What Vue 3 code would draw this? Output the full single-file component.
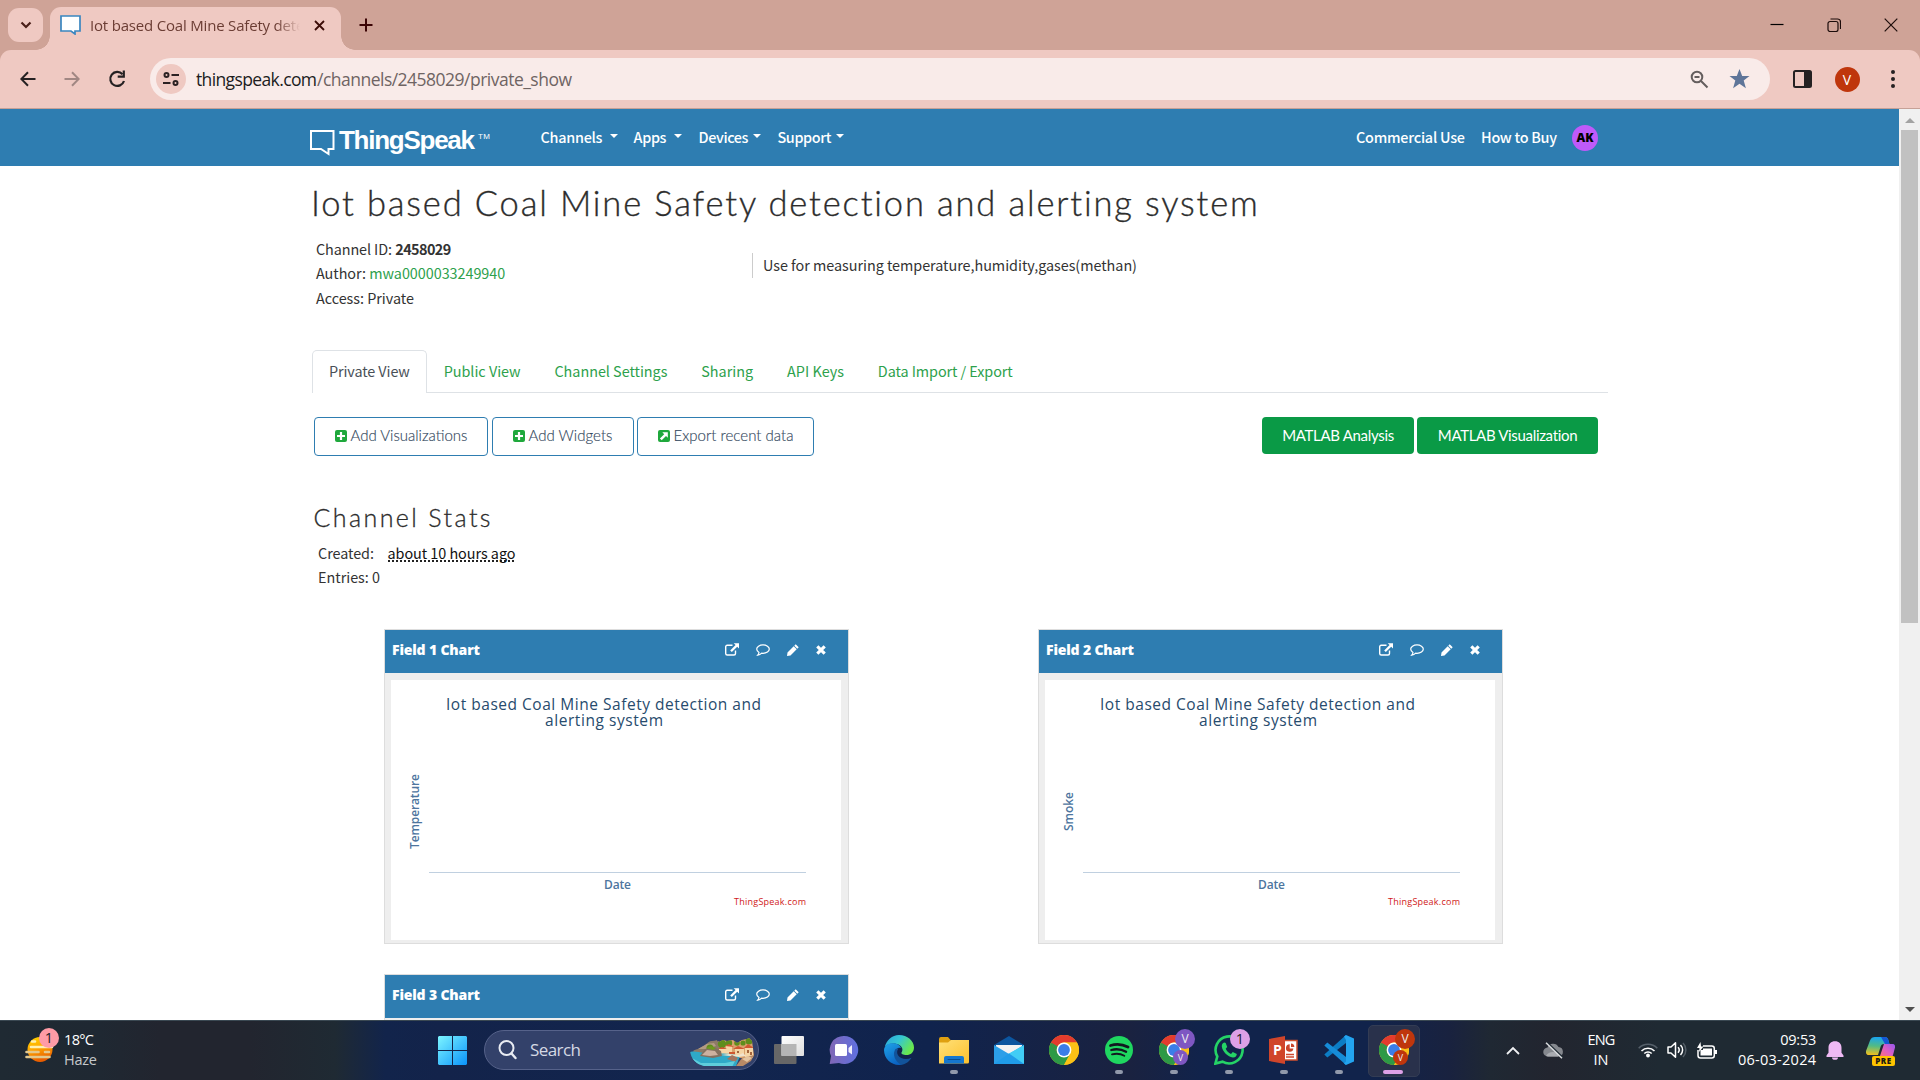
<script setup>
// Spreads an element's letters so that its text spans the given width in pixels.
const vFit = {
  mounted(el, { value }) {
    el.style.display = 'inline-block'
    el.style.whiteSpace = 'pre'
    const natural = el.getBoundingClientRect().width
    const gaps = Math.max(1, el.textContent.length - 1)
    el.style.letterSpacing = (value - natural) / gaps + 'px'
    el.style.width = value + 'px'
  },
}

const menus = [
  { label: 'Channels', width: 62, gap: 7, next: 16 },
  { label: 'Apps', width: 33, gap: 7, next: 17 },
  { label: 'Devices', width: 50, gap: 4, next: 17 },
  { label: 'Support', width: 54, gap: 4, next: 0 },
]

const tabs = [
  { label: 'Private View', width: 81, active: true },
  { label: 'Public View', width: 77 },
  { label: 'Channel Settings', width: 113 },
  { label: 'Sharing', width: 52 },
  { label: 'API Keys', width: 57 },
  { label: 'Data Import / Export', width: 135 },
]

const actions = [
  { label: 'Add Visualizations', width: 117, box: 174, icon: 'plus' },
  { label: 'Add Widgets', width: 84, box: 142, icon: 'plus' },
  { label: 'Export recent data', width: 120, box: 177, icon: 'arrow' },
]

const charts = [
  { name: 'Field 1 Chart', axis: 'Temperature', span: 75 },
  { name: 'Field 2 Chart', axis: 'Smoke', span: 39 },
  { name: 'Field 3 Chart' },
]

const apps = [
  { id: 'taskview' },
  { id: 'chat' },
  { id: 'edge' },
  { id: 'files', open: true },
  { id: 'mail' },
  { id: 'chrome' },
  { id: 'spotify', open: true },
  { id: 'chrome', open: true, profile: '#7e57c2' },
  { id: 'whatsapp', open: true, count: 1 },
  { id: 'powerpoint', open: true },
  { id: 'vscode', open: true },
  { id: 'chrome', open: true, profile: '#bf360c', active: true },
]
</script>

<template>
  <div class="screen">
    <header class="browser">
      <div class="strip">
        <div class="tab-search">
          <svg width="12" height="8" viewBox="0 0 12 8"><path d="M1.5 1.5 6 6l4.500-4.500" fill="none" stroke="#4a2019" stroke-width="2.200" /></svg>
        </div>
        <div class="tab">
          <svg class="favicon" width="21" height="20" viewBox="0 0 21 20"><path d="M1 1h19v15h-5v3l-4-3H1z" fill="#fff" stroke="#3a86c0" stroke-width="1.700" /></svg>
          <span class="tab-title"><span v-fit="248">Iot based Coal Mine Safety detection</span></span>
          <svg class="tab-close" width="11" height="11" viewBox="0 0 11 11"><path d="M1 1l9 9M10 1l-9 9" stroke="#3b0d08" stroke-width="1.800" /></svg>
        </div>
        <svg class="new-tab" width="14" height="14" viewBox="0 0 14 14"><path d="M7 .5v13M.5 7h13" stroke="#3b0404" stroke-width="2" /></svg>
        <div class="window-buttons">
          <svg width="14" height="14" viewBox="0 0 14 14"><path d="M.5 6.500h13" stroke="#000" stroke-width="1.200" /></svg>
          <svg width="14" height="14" viewBox="0 0 14 14"><path d="M3.500 1h7a3 3 0 0 1 3 3v7M1 5.500A2 2 0 0 1 3 3.500h6a2 2 0 0 1 2 2v6a2 2 0 0 1-2 2H3a2 2 0 0 1-2-2z" fill="none" stroke="#1c0c0a" stroke-width="1.200" /></svg>
          <svg width="14" height="14" viewBox="0 0 14 14"><path d="M.7.7l12.600 12.600M13.300.7.700 13.300" stroke="#1c0c0a" stroke-width="1.200" /></svg>
        </div>
      </div>
      <div class="toolbar">
        <svg class="back" width="16" height="16" viewBox="0 0 16 16"><path d="M15.500 8H1.500M8 1.300 1.300 8 8 14.700" fill="none" stroke="#252122" stroke-width="2" /></svg>
        <svg class="forward" width="16" height="16" viewBox="0 0 16 16"><path d="M.5 8h14M8 1.300 14.700 8 8 14.700" fill="none" stroke="#a18783" stroke-width="2" /></svg>
        <svg class="reload" width="18" height="18" viewBox="0 0 18 18"><path d="M14.500 4.200A7 7 0 1 0 16 11" fill="none" stroke="#252122" stroke-width="2.200" /><path d="M16.900.5v7.200H9.700V5.500h5V.5z" fill="#252122" /></svg>
        <div class="omnibox">
          <span class="site-info">
            <svg width="16" height="14" viewBox="0 0 16 14"><g fill="none" stroke="#2b2122" stroke-width="2"><circle cx="3.500" cy="3" r="2" /><path d="M8.500 3H16M0 11h7.500" /><circle cx="12.500" cy="11" r="2" /></g></svg>
          </span>
          <span class="url"><span v-fit="121">thingspeak.com</span><span class="path" v-fit="255">/channels/2458029/private_show</span></span>
          <svg class="lens" width="19" height="19" viewBox="0 0 19 19"><circle cx="7" cy="7" r="5.300" fill="none" stroke="#655e5e" stroke-width="2" /><path d="M4.500 7h5M11 11l6.500 6.500" stroke="#655e5e" stroke-width="2" /></svg>
          <svg class="star" width="21" height="20" viewBox="0 0 21 20"><path d="M10.500 0l2.700 7h7.300l-5.800 4.600 2.200 7.700-6.400-4.500-6.400 4.500 2.200-7.700L.5 7h7.300z" fill="#5f7599" /></svg>
        </div>
        <svg class="panel" width="19" height="18" viewBox="0 0 19 18"><rect x="1" y="1" width="17" height="16" rx="1.500" fill="none" stroke="#252122" stroke-width="2" /><path d="M11 1h7v16h-7z" fill="#252122" /></svg>
        <span class="profile">V</span>
        <svg class="kebab" width="4" height="18" viewBox="0 0 4 18"><g fill="#252122"><circle cx="2" cy="2" r="2" /><circle cx="2" cy="9" r="2" /><circle cx="2" cy="16" r="2" /></g></svg>
      </div>
    </header>

    <div class="viewport">
      <div class="page">
        <nav class="navbar">
          <svg class="logo-mark" width="25" height="26" viewBox="0 0 25 26"><path d="M1 1h22.500v18h-5v5l-7.500-5H1z" fill="none" stroke="#fff" stroke-width="2" /></svg>
          <span class="logo-text" v-fit="136">ThingSpeak</span>
          <span class="tm" v-fit="12">TM</span>
          <div class="menus">
            <span v-for="m in menus" :key="m.label" class="menu" :style="{ marginRight: m.next + 'px' }">
              <span v-fit="m.width">{{ m.label }}</span><i class="caret" :style="{ marginLeft: m.gap + 'px' }"></i>
            </span>
          </div>
          <div class="nav-right">
            <span v-fit="109">Commercial Use</span>
            <span v-fit="76">How to Buy</span>
            <b class="user">AK</b>
          </div>
        </nav>

        <main class="content">
          <h1><span v-fit="948">Iot based Coal Mine Safety detection and alerting system</span></h1>
          <section class="info">
            <div class="facts">
              <div><span v-fit="76">Channel ID:</span> <b v-fit="56">2458029</b></div>
              <div><span v-fit="50">Author:</span> <a v-fit="136">mwa0000033249940</a></div>
              <div><span v-fit="98">Access: Private</span></div>
            </div>
            <p class="about"><span v-fit="374">Use for measuring temperature,humidity,gases(methan)</span></p>
          </section>

          <ul class="tabs">
            <li v-for="t in tabs" :key="t.label" :class="{ active: t.active }"><span v-fit="t.width">{{ t.label }}</span></li>
          </ul>

          <section class="actions">
            <button v-for="a in actions" :key="a.label" class="outline" :style="{ width: a.box + 'px' }">
              <svg width="12" height="12" viewBox="0 0 12 12">
                <rect width="12" height="12" rx="2" fill="#1fa83c" />
                <path v-if="a.icon === 'plus'" d="M6 2v8M2 6h8" stroke="#fff" stroke-width="2.200" />
                <path v-else d="M4.300 2.200h5.500v5.500L8 6 3.700 10.300 1.900 8.500 6.200 4.200z" fill="#fff" />
              </svg>
              <span v-fit="a.width">{{ a.label }}</span>
            </button>
            <div class="matlab">
              <button class="solid analysis"><span v-fit="112">MATLAB Analysis</span></button>
              <button class="solid visual"><span v-fit="140">MATLAB Visualization</span></button>
            </div>
          </section>

          <h2><span v-fit="177">Channel Stats</span></h2>
          <section class="stats">
            <div><span v-fit="56">Created:</span><abbr v-fit="128">about 10 hours ago</abbr></div>
            <div><span v-fit="62">Entries: 0</span></div>
          </section>

          <section class="charts">
            <article v-for="c in charts" :key="c.name" class="card">
              <header>
                <b v-fit="88">{{ c.name }}</b>
                <span class="tools">
                  <svg width="14" height="13" viewBox="0 0 14 13"><path d="M7.500 2.200H2.200a1.500 1.500 0 0 0-1.500 1.500v6.800A1.500 1.500 0 0 0 2.200 12H9a1.500 1.500 0 0 0 1.500-1.500V7.500" fill="none" stroke="#fff" stroke-width="1.400" /><path d="M8.700.2H14v5.300l-1.800-1.800-5.400 5.400-1.600-1.600 5.400-5.400z" fill="#fff" /></svg>
                  <svg width="14" height="12" viewBox="0 0 14 12"><path d="M7 .9c3.500 0 6.300 1.900 6.300 4.200S10.500 9.300 7 9.300l-1.300-.1C4.700 10.200 3.300 11 1.700 11.200c.7-.8 1.100-1.500 1.300-2.700C1.600 7.700.7 6.500.7 5.100.7 2.800 3.500.9 7 .9z" fill="none" stroke="#fff" stroke-width="1.200" /></svg>
                  <svg width="12" height="12" viewBox="0 0 12 12"><path d="M8.700.300 11.700 3.300 10.300 4.700 7.300 1.700zM6.700 2.300 9.700 5.300 3.500 11.500 0 12l.5-3.500z" fill="#fff" /></svg>
                  <svg width="10" height="10" viewBox="0 0 10 10"><path d="M1.300 1.300l7.400 7.400M8.700 1.300 1.300 8.700" stroke="#fff" stroke-width="3.100" /></svg>
                </span>
              </header>
              <svg v-if="c.axis" class="plot" width="450" height="260" viewBox="0 0 450 260">
                <rect width="450" height="260" fill="#fff" />
                <g class="plot-title">
                  <text x="55" y="30" textLength="315">Iot based Coal Mine Safety detection and</text>
                  <text x="154" y="46" textLength="118">alerting system</text>
                </g>
                <text class="axis" text-anchor="middle" :textLength="c.span" transform="translate(28 131.500) rotate(-90)">{{ c.axis }}</text>
                <path d="M38 192.500h377" stroke="#c0d0e0" />
                <text class="axis" x="213" y="209" textLength="27">Date</text>
                <text class="credit" x="343" y="225" textLength="72">ThingSpeak.com</text>
              </svg>
            </article>
          </section>
        </main>
      </div>
      <aside class="scrollbar">
        <i class="up"></i>
        <i class="thumb"></i>
        <i class="down"></i>
      </aside>
    </div>

    <footer class="taskbar">
      <div class="weather">
        <svg width="30" height="28" viewBox="0 0 30 28">
          <defs><linearGradient id="sun" x1="0" y1="0" x2=".3" y2="1"><stop offset="0" stop-color="#ffd800" /><stop offset=".5" stop-color="#ffa800" /><stop offset="1" stop-color="#e85d00" /></linearGradient></defs>
          <circle cx="15" cy="13.500" r="12.500" fill="url(#sun)" />
          <g stroke-linecap="round" stroke-width="2.600"><path d="M7 5.500h3M6 11h21" stroke="#fff0b0" /><path d="M1.500 16h12M20 16h4M1.500 21h23" stroke="#e3c88d" /></g>
        </svg>
        <span class="badge">1</span>
        <p><span v-fit="30">18°C</span><br /><span class="dim" v-fit="33">Haze</span></p>
      </div>
      <svg class="start" width="29" height="29" viewBox="0 0 29 29">
        <defs><linearGradient id="win" x1="0" y1="0" x2="1" y2="1"><stop offset="0" stop-color="#7df5ff" /><stop offset="1" stop-color="#0a93fb" /></linearGradient></defs>
        <path d="M1 0h13v14H0V1zM15 0h13l1 1v13H15zM0 15h14v14H1l-1-1zM15 15h14v13l-1 1H15z" fill="url(#win)" />
      </svg>
      <div class="search">
        <svg width="19" height="20" viewBox="0 0 19 20"><circle cx="8.500" cy="8" r="7" fill="none" stroke="#e8ebf2" stroke-width="2" /><path d="M13.500 13.500l4 4.500" stroke="#e8ebf2" stroke-width="2.400" stroke-linecap="round" /></svg>
        <span v-fit="51">Search</span>
        <svg class="coast" width="64" height="28" viewBox="0 0 64 28">
          <defs><clipPath id="bay"><path d="M0 13 8 11l7-4 5-4 7-1 2 2 4-2 4 1 6-1 4 3 5-3 5-1 2-1 3 3 2 14-3 6-8 5H14C6 26 1 21 0 13z" /></clipPath></defs>
          <g clip-path="url(#bay)">
            <path d="M28 0h36v20H28z" fill="#d9a06c" /><path d="M3 13 16 4l11-2 5 9-8 6-18 1z" fill="#8d7a66" /><path d="M7 11l9-5 8-1 2 3-10 3z" fill="#b39a83" />
            <g fill="#5f8d1c"><circle cx="32" cy="6" r="4.200" /><circle cx="39" cy="5" r="3.200" /><circle cx="47" cy="5" r="2.800" /><circle cx="20" cy="10" r="3.500" /><circle cx="59" cy="3" r="3.500" /><circle cx="53" cy="5" r="2.600" /></g>
            <path d="M29 11h7v5h-7zM36 8h6v8h-6zM45 11h9v6h-9zM55 10h8v10h-8z" fill="#f5d5a6" /><path d="M28 11l4-2 5 2zM35 8l4-2 5 3zM43 11l5-3 7 3zM54 10l4-4 6 4zM39 14h6v2h-6z" fill="#cf5731" />
            <path d="M57 12h2v3h-2zM60 14h2v3h-2zM47 13h2v2h-2z" fill="#a5643c" />
            <path d="M0 14c8-2 16 3 24 2s20 0 26 2l-4 10H0z" fill="#2fa9c7" /><path d="M10 18l5-7 9-2 7 4 1 5-9 2z" fill="#84705f" /><path d="M12 17l5-5 8 1 3 4-8 1z" fill="#cdb1a0" /><path d="M16 10l5-2 5 2-3 2z" fill="#6d9a1e" />
            <path d="M31 17l8-1 10 1 4-2 3 3-7 1z" fill="#f1e3cd" /><path d="M37 21l5-4 6 3-3 4z" fill="#a4745f" /><path d="M46 28l6-8 12-3v11z" fill="#b98a66" /><path d="M52 21l6-3 4 2-5 4z" fill="#e4c4a0" />
            <path d="M2 20l9 5h24l10-2-3 6H8z" fill="#5fcddb" />
          </g>
        </svg>
      </div>

      <div class="apps">
        <div v-for="(a, i) in apps" :key="i" class="app" :class="{ open: a.open, active: a.active }">
          <svg width="30" height="30" viewBox="0 0 30 30">
            <template v-if="a.id === 'taskview'">
              <defs><linearGradient id="tv" x1="0" y1="0" x2="1" y2="1"><stop offset="0" stop-color="#fff" /><stop offset="1" stop-color="#dedede" /></linearGradient></defs>
              <rect y="9" width="22.500" height="20" rx="1" fill="#676767" /><rect x="7.500" y="1" width="22.500" height="20" rx="1" fill="url(#tv)" /><path d="M7.500 9h15v12h-15z" fill="#b5b5b5" />
            </template>
            <template v-else-if="a.id === 'chat'">
              <defs><linearGradient id="ch" x1="0" y1=".4" x2="1" y2=".4"><stop offset="0" stop-color="#8067b5" /><stop offset="1" stop-color="#5f70e0" /></linearGradient></defs>
              <path d="M15 1a14 14 0 1 1-5 27L.7 29 2 21A14 14 0 0 1 15 1z" fill="url(#ch)" /><rect x="6" y="9" width="12" height="12" rx="1.500" fill="#fff" /><path d="M19.500 13l3.500-3v9.500l-3.500-2.500z" fill="#f1f0fb" />
            </template>
            <template v-else-if="a.id === 'edge'">
              <defs>
                <linearGradient id="e1" x1="0" y1="0" x2="1" y2=".5"><stop offset="0" stop-color="#2ba4dc" /><stop offset=".5" stop-color="#35c6d3" /><stop offset="1" stop-color="#69e84d" /></linearGradient>
                <linearGradient id="e2" x1="0" y1="0" x2=".6" y2="1"><stop offset="0" stop-color="#1fa3e8" /><stop offset="1" stop-color="#0a5fc0" /></linearGradient>
              </defs>
              <path d="M.8 12C2.500 5 8 0 15 0c8.500 0 15 6 15 12.500 0 5-3.500 7.500-7.500 7.500-3.500 0-5.500-1-5-2.500 1.500-2 1.300-5-1.500-7C11.500 7.500 4 8 .8 12z" fill="url(#e1)" />
              <path d="M0 15C.5 9.500 5.500 7.800 10 8.300c3.500.3 6 2.400 7.200 4.700-3.500-1-7 2-6.200 6 1 5 6 8 11 7-2 2.500-4.500 4-7 4C7 30 0 23.500 0 15z" fill="url(#e2)" />
              <path d="M11.500 14C8 19 11 27 17.500 29.700c4-.6 8-3.200 10-7-5 2.500-11 1.300-13.300-2.200-1.500-2.200-1.500-5 .3-7-1-.2-2 0-3 .5z" fill="#12539a" />
            </template>
            <template v-else-if="a.id === 'files'">
              <defs><linearGradient id="fo" x1="0" y1="0" x2="1" y2="1"><stop offset="0" stop-color="#ffe078" /><stop offset="1" stop-color="#fcc12e" /></linearGradient></defs>
              <path d="M0 4a2 2 0 0 1 2-2h7l3 3.500h16v8H0z" fill="#dfa011" /><path d="M0 7.500h9L12 5h18v22a1.500 1.500 0 0 1-1.500 1.500H0z" fill="url(#fo)" /><path d="M5 28.500V23a2 2 0 0 1 2-2h16a2 2 0 0 1 2 2v5.500z" fill="#1577cf" /><path d="M9 24.500h12" stroke="#0a4f92" stroke-linecap="round" />
            </template>
            <template v-else-if="a.id === 'mail'">
              <path d="M0 10 15 1l15 9v8H0z" fill="#0b559f" /><path d="M2 10h26v8l-12 3-14-5z" fill="#f2f2f2" /><path d="M0 10l15 9 15-9v19H0z" fill="#2c9fe8" /><path d="M30 10 14 19l16 10z" fill="#41cdf5" /><path d="M0 29l15-10.500L30 29z" fill="#209ce9" />
            </template>
            <template v-else-if="a.id === 'chrome'">
              <circle cx="15" cy="15" r="15" fill="#fbc116" />
              <path d="M15 15 2 7.500A15 15 0 0 0 15 30l6.200-11.400z" fill="#2d9a46" /><path d="M2 7.500A15 15 0 0 1 28 7.500H15a7.500 7.500 0 0 0-6.500 11.200z" fill="#e33b2e" /><path d="M14.500 7.500H28A15 15 0 0 1 15 30l6.500-11.300z" fill="#fbc116" /><path d="M2 7.500 8.500 18.700 15 15z" fill="#2d9a46" />
              <circle cx="15" cy="15" r="7.400" fill="#fff" /><circle cx="15" cy="15" r="5.900" fill="#3b7de8" />
            </template>
            <template v-else-if="a.id === 'spotify'">
              <circle cx="15" cy="15" r="14" fill="#1fd760" /><g fill="none" stroke="#121820" stroke-linecap="round"><path d="M6.500 10.500c6-1.800 12-1.300 17.500 1.600" stroke-width="2.800" /><path d="M7.300 15c5-1.400 10-.9 14.800 1.700" stroke-width="2.300" /><path d="M8 19.300c4.400-1.100 8.500-.8 12.300 1.400" stroke-width="1.900" /></g>
            </template>
            <template v-else-if="a.id === 'whatsapp'">
              <path d="M1.400 28.600 3.300 21.500A13.500 13.500 0 1 1 8.500 26.700z" fill="none" stroke="#25d366" stroke-width="2.600" /><path d="M10.500 7.500c-1 0-3 1.500-2.700 4 .6 5 6 10.500 11 11 2.500.2 4-1.500 4-3.500l-4-2-1.800 2c-2.500-.9-4.500-3-5.300-5.200l1.500-1.800-1.500-4z" fill="#25d366" />
            </template>
            <template v-else-if="a.id === 'powerpoint'">
              <path d="M15 5.500h13v19.500H15z" fill="#fff" stroke="#d0502f" stroke-width="1.500" /><path d="M17 12.500a3.700 3.700 0 1 0 7.400 1h-3.700V9.300a3.700 3.700 0 0 0-3.700 3.200z" fill="#c9452a" /><path d="M22 8.500a3.500 3.500 0 0 1 3.300 3.500H22z" fill="#c9452a" /><path d="M17 19.500h8M17 22h8" stroke="#cf4a30" stroke-width="1.300" /><path d="M0 4 16 1v28L0 26z" fill="#d0452a" /><text x="4" y="20" class="ppt-letter">P</text>
            </template>
            <template v-else>
              <path d="M22 0 .3 19.500l3 3L22 8z" fill="#0c7dc5" /><path d="M22 30 .3 10.500l3-3L22 22z" fill="#168cd8" /><path d="M20 1.500l2-1.500 8 3.500v23L22 30l-2-1.500 2-2V5z" fill="#23a4f0" />
            </template>
          </svg>
          <span v-if="a.profile" class="big" :style="{ background: a.profile }">V</span>
          <span v-if="a.profile" class="small" :style="{ background: a.profile }">V</span>
          <span v-if="a.count" class="count">{{ a.count }}</span>
        </div>
      </div>

      <div class="tray">
        <svg class="chev" width="14" height="9" viewBox="0 0 14 9"><path d="M1 8l6-6 6 6" fill="none" stroke="#f0f1f3" stroke-width="1.800" /></svg>
        <svg class="cloud" width="21" height="17" viewBox="0 0 21 17"><path d="M5 14.500a4.500 4.500 0 0 1-.5-9A6 6 0 0 1 15.500 5a4.800 4.800 0 0 1 .5 9.500z" fill="#85888e" /><path d="M3 14c2-4 9-6 13-1l-1 1.500H5z" fill="#a9abb0" /><path d="M3.800.3l16 15.500" stroke="#1f2a33" stroke-width="2" /><path d="M3 .8l16 15.500" stroke="#dcdde0" stroke-width="1.500" /></svg>
        <p class="lang"><span v-fit="28">ENG</span><br /><span v-fit="15">IN</span></p>
        <svg class="wifi" width="20" height="16" viewBox="0 0 20 16"><g fill="none" stroke-width="1.600"><path d="M.7 6.200a13 13 0 0 1 18.600 0" stroke="#56606a" /><path d="M3.500 9a9.200 9.200 0 0 1 13 0M6.300 11.500a5.300 5.300 0 0 1 7.400 0" stroke="#fff" /></g><circle cx="10" cy="13.500" r="1.900" fill="#fff" /></svg>
        <svg class="sound" width="20" height="18" viewBox="0 0 20 18"><path d="M1 6h3l4.500-4.300v14.600L4 12H1z" fill="none" stroke="#fff" stroke-width="1.500" stroke-linejoin="round" /><g fill="none" stroke-width="1.500"><path d="M11 6.300a4 4 0 0 1 0 5.400M13.500 4a7 7 0 0 1 0 10" stroke="#fff" /><path d="M16 2a10 10 0 0 1 0 14" stroke="#535d66" /></g></svg>
        <svg class="battery" width="20" height="17" viewBox="0 0 20 17"><rect x="1" y="4" width="16.300" height="12" rx="2.500" fill="none" stroke="#fff" stroke-width="1.500" /><path d="M3.500 6.500h11.500v7H3.500z" fill="#fff" /><path d="M18 8h2v4h-2z" fill="#fff" /><path d="M0 0h6v8H0z" fill="#1f2a33" /><path d="M3.500 0 0 6h2.500L2 10l4.500-5.500H4z" fill="#fff" /></svg>
        <p class="clock"><span v-fit="36">09:53</span><br /><span v-fit="78">06-03-2024</span></p>
        <svg class="bell" width="18" height="19" viewBox="0 0 18 19"><path d="M9 .3c4 0 6.500 2.700 6.500 6.400v5l2 2.800v1.500H.5v-1.500l2-2.800v-5C2.500 3 5 .3 9 .3zM6 16.500h6a3 2.300 0 0 1-6 0z" fill="#efb9f4" /></svg>
        <div class="copilot">
          <svg width="29" height="22" viewBox="0 0 29 22">
            <defs>
              <linearGradient id="c1" x1=".4" y1="0" x2=".3" y2="1"><stop offset="0" stop-color="#19a5f0" /><stop offset=".5" stop-color="#52bb84" /><stop offset="1" stop-color="#f2c01d" /></linearGradient>
              <linearGradient id="c2" x1="1" y1="0" x2="0" y2="1"><stop offset="0" stop-color="#9458f0" /><stop offset=".5" stop-color="#e25fc0" /><stop offset="1" stop-color="#ff7a5c" /></linearGradient>
            </defs>
            <path d="M9 0h10c2 0 3 1.500 3.500 3.500L23.500 7H18c-2 0-3 1-3.500 3l-2.500 8H3c-2.500 0-3.500-2-3-4L4 3.500C5 1 6.500 0 9 0z" fill="url(#c1)" /><path d="M15 0h4c2 0 3 1.500 3.500 3.500L23.500 7H19z" fill="#1557d4" /><path d="M18 7h8.500c2 0 3 1.500 2.500 3.500L27 18c-1 3-2.500 4-5 4h-9z" fill="url(#c2)" />
          </svg>
          <b>PRE</b>
        </div>
      </div>
    </footer>
  </div>
</template>

<style>
body { margin: 0; overflow: hidden; }
</style>

<style scoped>
* { box-sizing: border-box; }
svg { display: block; flex: none; }
p, h1, h2, ul { margin: 0; padding: 0; }
.screen { width: 1920px; height: 1080px; display: flex; flex-direction: column; overflow: hidden; background: #fff; font-family: "Noto Sans CJK SC", "Open Sans", sans-serif; }

.browser { height: 109px; background: #cfa397; font-family: "Open Sans", "Noto Sans", sans-serif; }
.strip { height: 50px; display: flex; align-items: flex-start; }
.tab-search { width: 35px; height: 34px; margin: 8px 0 0 8px; border-radius: 11px; background: #efc9c2; display: flex; align-items: center; justify-content: center; }
.tab { position: relative; width: 291px; height: 43px; margin: 7px 0 0 7px; padding-left: 10px; border-radius: 11px 11px 0 0; background: #efc9c2; display: flex; align-items: center; }
.tab::before, .tab::after { content: ""; position: absolute; bottom: 0; width: 14px; height: 14px; }
.tab::before { left: -14px; background: radial-gradient(circle at 0 0, transparent 13.5px, #efc9c2 14px); }
.tab::after { right: -14px; background: radial-gradient(circle at 100% 0, transparent 13.5px, #efc9c2 14px); }
.favicon { margin-top: -8px; }
.tab-title { width: 210px; margin: -7px 0 0 9px; overflow: hidden; white-space: nowrap; font-size: 15px; line-height: 24px; color: #6b3d34; -webkit-mask-image: linear-gradient(90deg, #000 186px, transparent 210px); mask-image: linear-gradient(90deg, #000 186px, transparent 210px); }
.tab-close { margin: -7px 0 0 14px; }
.new-tab { margin: 18px 0 0 18px; }
.window-buttons { display: flex; gap: 43px; margin: 18px 22px 0 auto; }
.toolbar { height: 59px; display: flex; align-items: center; background: #efc9c2; border-bottom: 1px solid #c6a197; border-radius: 11px 11px 0 0; }
.back { margin-left: 20px; }
.forward { margin-left: 28px; }
.reload { margin-left: 28px; }
.omnibox { width: 1620px; height: 42px; margin-left: 24px; border-radius: 21px; background: #f9ebe9; display: flex; align-items: center; }
.site-info { width: 30px; height: 30px; margin-left: 6px; border-radius: 50%; background: #efc9c2; display: flex; align-items: center; justify-content: center; }
.url { margin-left: 10px; font-size: 17.500px; line-height: 40px; color: #201c1d; white-space: nowrap; }
.path { color: #6f6463; }
.lens { margin-left: auto; }
.star { margin: 0 20px 0 20px; }
.panel { margin-left: 22.500px; }
.profile { width: 25px; height: 25px; margin-left: 23px; border-radius: 50%; background: #bf360c; color: #fff; font-size: 14px; line-height: 25px; text-align: center; }
.kebab { margin-left: 31px; }

.viewport { height: 911px; display: flex; overflow: hidden; }
.page { width: 1899px; overflow: hidden; }
.scrollbar { width: 21px; display: flex; flex-direction: column; align-items: center; background: #f0f0f0; }
.up { margin-top: 9px; border: 5px solid transparent; border-top: 0; border-bottom-color: #a3a3a3; }
.thumb { width: 17px; height: 493px; margin-top: 7px; background: #c1c1c1; }
.down { margin: auto 0 8px; border: 5px solid transparent; border-bottom: 0; border-top-color: #505050; }

.navbar { height: 57px; padding-left: 310px; display: flex; align-items: flex-start; background: #2e7db1; color: #fff; font-size: 14.400px; font-weight: 500; line-height: 55px; }
.logo-mark { margin-top: 21px; }
.logo-text { margin: 13px 0 0 4px; font: bold 26px/36px "Liberation Sans Narrow", "Liberation Sans", sans-serif; }
.tm { margin: 22px 0 0 3px; font: 8px/12px "Liberation Sans", sans-serif; }
.menus { display: flex; margin-left: 50.500px; }
.menu { display: flex; align-items: center; }
.caret { border: 4px solid transparent; border-bottom: 0; border-top-color: #fff; margin-bottom: 2px; }
.nav-right { display: flex; gap: 16px; margin: 0 301px 0 auto; }
.user { width: 26px; height: 26px; margin: 16px 0 0 -1px; border-radius: 50%; background: #bf5afa; color: #000; font: 800 12px/26px "Open Sans", sans-serif; text-align: center; }

.content { padding-left: 312px; color: #333; font-size: 14.400px; line-height: 24.500px; }
h1 { height: 51px; margin: 11px 0 0 -1px; font: 300 34.500px/51px Lato, sans-serif; color: #2c2c2c; -webkit-text-stroke: .35px #2c2c2c; }
.info { height: 74px; margin: 8.500px 0 0 4px; display: flex; white-space: nowrap; }
.facts { width: 436px; }
.facts a { color: #2da14c; }
.about { height: 25px; margin-top: 16.500px; padding-left: 10px; border-left: 1px solid #ccc; line-height: 24px; }
.tabs { width: 1296px; height: 43px; margin-top: 39.500px; display: flex; list-style: none; border-bottom: 1px solid #dee2e6; }
.tabs li { padding: 0 15.900px; height: 43px; border: 1px solid transparent; border-bottom: 0; line-height: 40px; color: #2da14c; }
.tabs li.active { border-color: #dee2e6; border-radius: 5px 5px 0 0; background: #fff; color: #495057; }
.actions { width: 1286px; margin-top: 24px; padding-left: 2px; display: flex; align-items: flex-start; gap: 3.500px; }
button { padding: 0; border: 0; display: flex; justify-content: center; font: 300 15px/36px Lato, sans-serif; border-radius: 4px; }
.outline { height: 39px; gap: 4px; border: 1px solid #2e7db1; background: #fff; color: #34495e; line-height: 35px; -webkit-text-stroke: .15px #34495e; }
.outline svg { margin-top: -1px; }
.outline span { margin-top: -2px; }
.matlab { display: flex; gap: 3px; margin-left: auto; }
.solid { height: 37px; background: #0a9a46; color: #fff; line-height: 35px; font-weight: 400; }
.outline, .solid { align-items: center; }
.analysis { width: 152px; }
.visual { width: 181px; }
h2 { margin: 44px 0 0 1.500px; font: 300 25px/34px Lato, sans-serif; color: #2c2c2c; -webkit-text-stroke: .3px #2c2c2c; }
.stats { margin: 6.500px 0 0 6px; }
.stats > div { display: flex; }
abbr { margin-left: 13.500px; height: 22px; color: #111; background: repeating-linear-gradient(90deg, #222 0 2px, transparent 2px 4px) 0 19px / 100% 2px no-repeat; }
.charts { margin: 39.500px 0 0 72px; display: grid; grid-template-columns: 465px 465px; gap: 30px 189px; }
.card { height: 315px; border: 1px solid #ddd; background: #eee; }
.card header { height: 43px; padding-left: 7px; display: flex; background: #2e7db1; color: #fff; font: bold 14px/39px "Open Sans", sans-serif; }
.tools { display: flex; align-items: center; margin: 0 22px 0 auto; height: 39px; gap: 17px; }
.plot { margin: 7px 0 0 6px; font-family: "Open Sans", sans-serif; }
.plot-title { font-size: 15.500px; fill: #274b6d; }
.axis { font-size: 12px; font-weight: 600; fill: #4d759e; }
.credit { font-size: 9px; fill: #d01818; }

.taskbar { height: 60px; display: flex; align-items: center; box-shadow: inset 0 1px #3a4852; background: linear-gradient(90deg, #1f2a33 0, #1f2832 100px, #22252f 160px, #22252f 250px, #1f2a33 335px, #12244b 385px, #13234a 440px, #12254e 700px, #10234d 930px, #1a2240 1130px, #11234b 1200px, #11234b 1370px, #19223f 1450px, #1f2833 1490px, #22252f 1550px, #1f2a33 1660px, #1f2a33 100%); font-family: "Open Sans", "Noto Sans", sans-serif; color: #fff; font-size: 14.500px; line-height: 20px; }
.weather { position: relative; width: 438px; display: flex; align-items: center; }
.weather svg { margin-left: 25px; }
.weather p { margin-left: 9px; }
.dim { color: #c5c8cb; }
.badge, .count { position: absolute; width: 20px; height: 20px; border-radius: 50%; color: #24202a; text-align: center; line-height: 20px; }
.badge { left: 39px; top: -2px; background: #ff9ba6; }
.search { width: 275px; height: 40px; margin-left: 17px; padding-left: 13px; display: flex; align-items: center; border: 1px solid #56628a; border-radius: 20px; background: #33416a; color: #d5d9e4; font-size: 17px; }
.search > span { margin-left: 13px; }
.coast { margin: 4px 4px 0 auto; }
.apps { display: flex; margin-left: 2px; }
.app { position: relative; width: 55px; height: 60px; display: flex; align-items: center; justify-content: center; }
.app.active::before { content: ""; position: absolute; left: 2px; top: 5px; width: 50px; height: 50px; border: 1px solid #333c54; border-radius: 5px; background: #29314b; }
.app svg { position: relative; }
.app.open::after { content: ""; position: absolute; bottom: 6px; left: 24px; width: 8px; height: 4px; border-radius: 2px; background: #9199ab; }
.app.active::after { left: 17px; width: 20px; background: #dda0e6; }
.big, .small { position: absolute; border-radius: 50%; text-align: center; color: #eee; }
.big { left: 29px; top: 9px; width: 20px; height: 20px; font-size: 12px; line-height: 20px; }
.small { left: 27px; top: 30px; width: 15px; height: 15px; font-size: 9px; line-height: 15px; }
.count { left: 29px; top: 9px; background: #dda0e6; }
.ppt-letter { font: bold 14px "Open Sans", sans-serif; fill: #fff; }
.tray { display: flex; align-items: center; margin-left: 85px; }
.cloud { margin-left: 22.500px; }
.lang { width: 30px; margin-left: 22.500px; text-align: center; }
.wifi { margin-left: 22px; }
.sound { margin-left: 9px; }
.battery { margin-left: 10px; }
.clock { width: 78px; margin-left: 21px; text-align: right; }
.bell { margin-left: 10px; }
.copilot { display: flex; flex-direction: column; align-items: center; margin: 2px 0 0 22px; }
.copilot b { width: 23px; height: 10px; margin: -3px 0 0 6px; position: relative; border-radius: 2px; background: #ffc400; color: #1d1a10; font: 800 8px/10px "Open Sans", sans-serif; text-align: center; letter-spacing: .5px; }
</style>
